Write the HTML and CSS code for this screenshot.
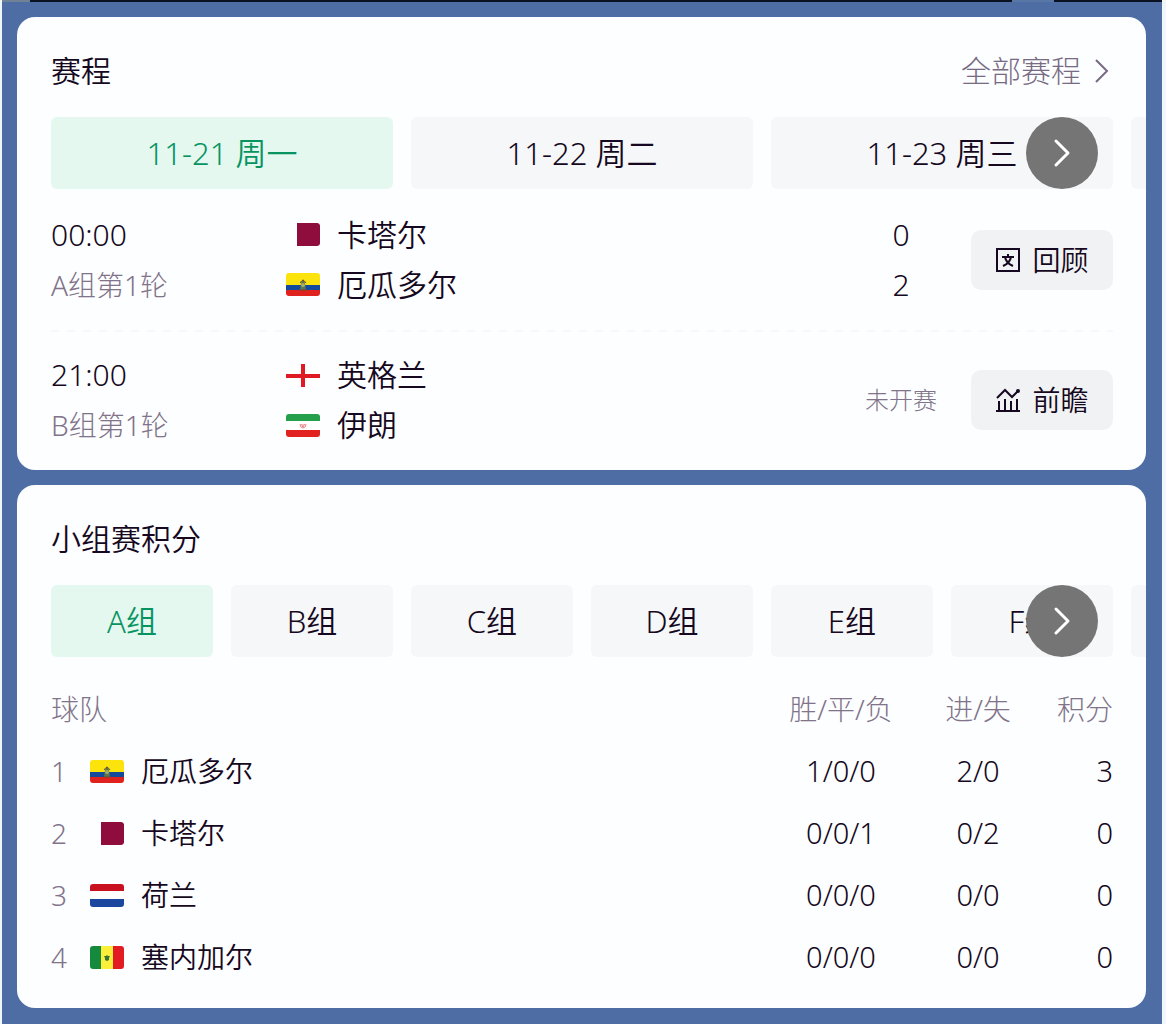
FILE: index.html
```html
<!DOCTYPE html>
<html lang="zh-CN">
<head>
<meta charset="utf-8">
<meta name="viewport" content="width=device-width, initial-scale=1">
<title>赛程与积分</title>
<link rel="stylesheet" href="styles.css">
</head>
<body>
<svg class="defs" aria-hidden="true">
  <symbol id="qa" viewBox="0 0 34 23"><rect x="11" width="23" height="23" rx="2" fill="#8f0d3c"/><path d="M11 0h4v23h-4z" fill="#8f0d3c"/></symbol>
  <symbol id="ec" viewBox="0 0 34 23"><path d="M0 0h34v12H0z" fill="#fbe30b"/><path d="M0 12h34v6H0z" fill="#144a9c"/><path d="M0 17h34v6H0z" fill="#e0221f"/><path d="M14 17l1-7 2-4 2 4 1 7z" fill="#5b7655"/><path d="M14 10q3-5 6 0M13 17h8" fill="none" stroke="#6b4b2f"/><circle cx="17" cy="12" r="2" fill="#a5ad68"/></symbol>
  <symbol id="en" viewBox="0 0 34 23"><path d="M0 0h34v23H0z" fill="#fff"/><path d="M0 10h34v4H0zM15 0h4v23h-4z" fill="#e01a25"/></symbol>
  <symbol id="ir" viewBox="0 0 34 23"><path d="M0 0h34v23H0z" fill="#fff"/><path d="M0 0h34v7H0z" fill="#249f4c"/><path d="M0 16h34v7H0z" fill="#e2221f"/><path d="M14 10q0 4 3 4t3-4M17 10v4M15 10l2 3 2-3" fill="none" stroke="#ea8a8c"/></symbol>
  <symbol id="nl" viewBox="0 0 34 23"><path d="M0 0h34v23H0z" fill="#fff"/><path d="M0 0h34v7H0z" fill="#c9101f"/><path d="M0 15h34v8H0z" fill="#1c479e"/></symbol>
  <symbol id="sn" viewBox="0 0 34 23"><path d="M0 0h11v23H0z" fill="#158a3c"/><path d="M11 0h12v23H11z" fill="#fcef3a"/><path d="M23 0h11v23H23z" fill="#e31b23"/><path d="M17 9l1 1h2l-1 2v2l-2 1-2-1v-2l-1-2h2z" fill="#35753a"/></symbol>
</svg>
<main class="frame">
  <div class="topline"></div>
  <section class="card">
    <header class="head">
      <h2>赛程</h2>
      <a class="more" href="#all">全部赛程
        <svg width="14" height="26" viewBox="0 0 14 26" fill="none" stroke="currentColor" stroke-width="2"><path d="M1 2l11 11L1 24"/></svg>
      </a>
    </header>
    <div class="scroller">
      <div class="tabs days">
        <button class="tab active">11-21 周一</button>
        <button class="tab">11-22 周二</button>
        <button class="tab">11-23 周三</button>
        <button class="tab" aria-label="11-24 周四"></button>
      </div>
      <button class="next" aria-label="后面的日期"><svg width="18" height="30" viewBox="0 0 18 30"><path d="M3 3l12 12L3 27"/></svg></button>
    </div>
    <article class="match">
      <div class="when"><time>00:00</time><span class="round">A组第1轮</span></div>
      <div class="teams">
        <div class="team"><svg class="flag"><use href="#qa"/></svg>卡塔尔</div>
        <div class="team"><svg class="flag"><use href="#ec"/></svg>厄瓜多尔</div>
      </div>
      <div class="score"><span>0</span><span>2</span></div>
      <button class="action">
        <svg width="26" height="26" viewBox="0 0 26 26" fill="none" stroke="currentColor" stroke-width="2"><path d="M2 2h22v22H2z"/><path d="M7 10h12M13 7v3M10 10q1 6 8 9M16 10q-1 6-8 9"/></svg>回顾
      </button>
    </article>
    <article class="match">
      <div class="when"><time>21:00</time><span class="round">B组第1轮</span></div>
      <div class="teams">
        <div class="team"><svg class="flag"><use href="#en"/></svg>英格兰</div>
        <div class="team"><svg class="flag"><use href="#ir"/></svg>伊朗</div>
      </div>
      <div class="pending">未开赛</div>
      <button class="action">
        <svg width="26" height="26" viewBox="0 0 26 26" fill="none" stroke="currentColor" stroke-width="2"><path d="M1 24h24M4 24V14M10 24V12M16 24V14M22 24V12M2 11l8-8 7 7 6-6"/><circle cx="23" cy="4" r="1"/></svg>前瞻
      </button>
    </article>
  </section>

  <section class="card">
    <header class="head"><h2>小组赛积分</h2></header>
    <div class="scroller">
      <div class="tabs groups">
        <button class="tab active">A组</button>
        <button class="tab">B组</button>
        <button class="tab">C组</button>
        <button class="tab">D组</button>
        <button class="tab">E组</button>
        <button class="tab">F组</button>
        <button class="tab" aria-label="G组"></button>
      </div>
      <button class="next" aria-label="后面的小组"><svg width="18" height="30" viewBox="0 0 18 30"><path d="M3 3l12 12L3 27"/></svg></button>
    </div>
    <table class="standings">
      <colgroup><col class="col-rank"><col><col class="col-record"><col class="col-goals"><col class="col-points"></colgroup>
      <thead><tr><th class="club" colspan="2">球队</th><th>胜/平/负</th><th>进/失</th><th class="points">积分</th></tr></thead>
      <tbody>
        <tr><td class="rank">1</td><td class="club"><div class="team"><svg class="flag"><use href="#ec"/></svg>厄瓜多尔</div></td><td>1/0/0</td><td>2/0</td><td class="points">3</td></tr>
        <tr><td class="rank">2</td><td class="club"><div class="team"><svg class="flag"><use href="#qa"/></svg>卡塔尔</div></td><td>0/0/1</td><td>0/2</td><td class="points">0</td></tr>
        <tr><td class="rank">3</td><td class="club"><div class="team"><svg class="flag"><use href="#nl"/></svg>荷兰</div></td><td>0/0/0</td><td>0/0</td><td class="points">0</td></tr>
        <tr><td class="rank">4</td><td class="club"><div class="team"><svg class="flag"><use href="#sn"/></svg>塞内加尔</div></td><td>0/0/0</td><td>0/0</td><td class="points">0</td></tr>
      </tbody>
    </table>
  </section>
</main>
</body>
</html>
```
FILE: styles.css
```css
* { box-sizing: border-box; }
body {
  margin: 0;
  background: #f1f6fb;
  color: #150820;
  font: 350 30px/50px "Noto Sans", "Noto Sans CJK SC", sans-serif;
}
button { border: 0; padding: 0; font: inherit; color: inherit; cursor: pointer; }
.defs { position: absolute; width: 0; height: 0; }
.frame {
  display: flex;
  flex-direction: column;
  gap: 15px;
  min-height: 100vh;
  margin: 0 4px 0 2px;
  padding: 0 16px 16px 15px;
  background: #4e6da4;
}
.topline {
  height: 2px;
  margin: 0 -16px 0 -15px;
  background: linear-gradient(90deg, #6f8296 28px, #0a1120 28px calc(100% - 150px), #5877a6 calc(100% - 150px) calc(100% - 108px), #0a1120 calc(100% - 108px));
}
.card {
  padding: 29px 33px 0 34px;
  overflow: hidden;
  border-radius: 18px;
  background: #fcfeff;
}
.head { display: flex; justify-content: space-between; height: 71px; }
h2 { margin: 0; font-size: 30px; font-weight: 350; }
.more { display: flex; align-items: center; gap: 14px; height: 50px; padding-right: 4px; color: #786a82; font-weight: 300; text-decoration: none; }
.scroller { position: relative; margin-right: -33px; }
.tabs { display: grid; grid-auto-flow: column; gap: 18px; margin-right: 33px; }
.days { grid-auto-columns: calc((100% - 36px) / 3); }
.groups { grid-auto-columns: calc((100% - 90px) / 6); }
.tab { height: 72px; border-radius: 6px; background: #f6f7f9; font-size: 31px; }
.tab.active { background: #e4f8f0; color: #079461; }
.next {
  position: absolute;
  top: 0;
  right: 48px;
  display: grid;
  place-items: center;
  width: 72px;
  height: 72px;
  border-radius: 50%;
  background: #757575;
}
.next path { fill: none; stroke: #fff; stroke-width: 3; stroke-linecap: round; stroke-linejoin: round; }
.match {
  display: grid;
  grid-template-columns: 235px 1fr 72px 34px 142px;
  align-items: center;
  height: 141px;
}
.match + .match {
  height: 140px;
  background: repeating-linear-gradient(90deg, #f5f7f9 0 8px, transparent 8px 16px) top / 100% 2px no-repeat;
}
.when, .teams, .score { display: flex; flex-direction: column; }
.round { font-size: 28px; font-weight: 300; color: #817389; }
.team { display: flex; align-items: center; gap: 17px; }
.flag { width: 34px; height: 23px; border-radius: 3px; }
.score { text-align: center; }
.pending { font-size: 24px; font-weight: 300; color: #817389; white-space: nowrap; }
.action {
  grid-column: 5;
  display: flex;
  align-items: center;
  justify-content: center;
  gap: 11px;
  height: 60px;
  border-radius: 10px;
  background: #f1f2f4;
  font-size: 28px;
}
.standings { width: 100%; margin: 21px 0 20px; border-collapse: collapse; table-layout: fixed; font-size: 28px; }
.col-rank { width: 39px; }
.col-record { width: 170px; }
.col-goals { width: 104px; }
.col-points { width: 83px; }
.standings th, .standings td { height: 62px; padding: 0; text-align: center; }
.standings th { color: #817389; font-weight: 300; }
.standings td { font-size: 29px; }
.standings td.rank { color: #817389; font-size: 28px; font-weight: 300; text-align: left; }
.standings .club { font-size: 28px; text-align: left; }
.standings .points { text-align: right; }
```
